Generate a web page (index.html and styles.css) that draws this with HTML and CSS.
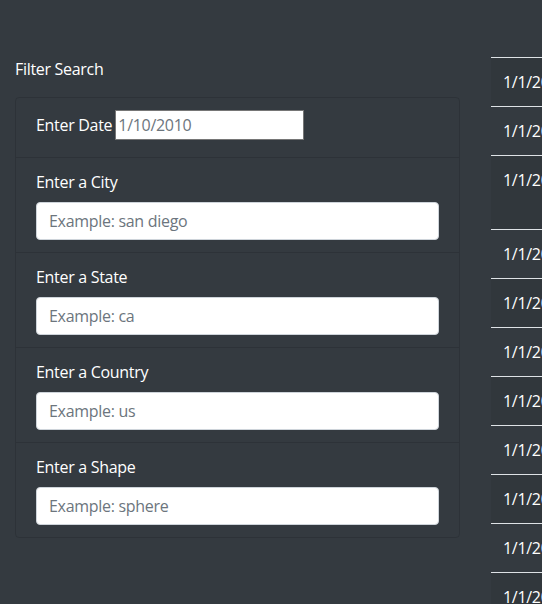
FILE: index.html
```html
<!DOCTYPE html>
<html>
<head>
<meta charset="utf-8">
<link rel="stylesheet" href="styles.css">
</head>
<body>
<div class="page">
  <div class="sidebar">
    <div class="title">Filter Search</div>
    <ul class="card">
      <li class="item item-date">
        <label>Enter Date</label> <input class="date-input" type="text" placeholder="1/10/2010">
      </li>
      <li class="item">
        <label class="lbl">Enter a City</label>
        <input class="form-control" type="text" placeholder="Example: san diego">
      </li>
      <li class="item">
        <label class="lbl">Enter a State</label>
        <input class="form-control" type="text" placeholder="Example: ca">
      </li>
      <li class="item">
        <label class="lbl">Enter a Country</label>
        <input class="form-control" type="text" placeholder="Example: us">
      </li>
      <li class="item">
        <label class="lbl">Enter a Shape</label>
        <input class="form-control" type="text" placeholder="Example: sphere">
      </li>
    </ul>
  </div>
  <div class="results">
    <table class="table">
      <tbody>
        <tr><td>1/1/2010</td><td></td></tr>
        <tr><td>1/1/2010</td><td></td></tr>
        <tr class="tall"><td>1/1/2010</td><td></td></tr>
        <tr><td>1/1/2010</td><td></td></tr>
        <tr><td>1/1/2010</td><td></td></tr>
        <tr><td>1/1/2010</td><td></td></tr>
        <tr><td>1/1/2010</td><td></td></tr>
        <tr><td>1/1/2010</td><td></td></tr>
        <tr><td>1/1/2010</td><td></td></tr>
        <tr><td>1/1/2010</td><td></td></tr>
        <tr><td>1/1/2010</td><td></td></tr>
      </tbody>
    </table>
  </div>
</div>
</body>
</html>
```

FILE: styles.css
```css
html, body {
  margin: 0;
  padding: 0;
  background: #343a40;
  overflow: hidden;
}
body {
  font-family: "Open Sans", "Noto Sans", sans-serif;
  font-size: 16px;
  line-height: 24px;
  letter-spacing: -0.3px;
  color: #fff;
}
.page {
  display: flex;
  padding-top: 57px;
  width: 760px;
}
.sidebar {
  width: 445px;
  flex: none;
  padding: 0 15px 0 15px;
}
.title {
  margin-bottom: 16px;
}
.card {
  list-style: none;
  margin: 0;
  padding: 0;
  border: 1px solid rgba(0,0,0,.125);
  border-radius: 4px;
}
.item {
  padding: 12px 20px;
  border-bottom: 1px solid rgba(0,0,0,.125);
}
.item:last-child {
  border-bottom: none;
}
.item-date {
  display: flex;
  align-items: center;
  padding-top: 12px;
  padding-bottom: 17px;
}
.date-input {
  margin-left: 3px;
  width: 183px;
  height: 26px;
  padding: 1px 2px;
  border: 1px solid #767676;
  font: inherit;
  letter-spacing: -0.3px;
  color: #6c757d;
  box-sizing: content-box;
}
.date-input::placeholder { color: #6c757d; }
.lbl {
  display: block;
  margin-bottom: 8px;
}
.form-control {
  display: block;
  width: 100%;
  height: 38px;
  box-sizing: border-box;
  padding: 6px 12px;
  font: inherit;
  letter-spacing: -0.3px;
  border: 1px solid #ced4da;
  border-radius: 4px;
  background: #fff;
  color: #495057;
}
.form-control::placeholder { color: #6c757d; }
.results {
  margin-left: 16px;
  flex: 1;
}
.table {
  width: 100%;
  border-collapse: collapse;
}
.table td {
  padding: 12px;
  border-top: 1px solid #dee2e6;
  vertical-align: top;
  white-space: nowrap;
}
.table tbody tr:nth-child(odd) {
  background: rgba(0,0,0,.05);
}
.tall td { height: 49px; }
```
